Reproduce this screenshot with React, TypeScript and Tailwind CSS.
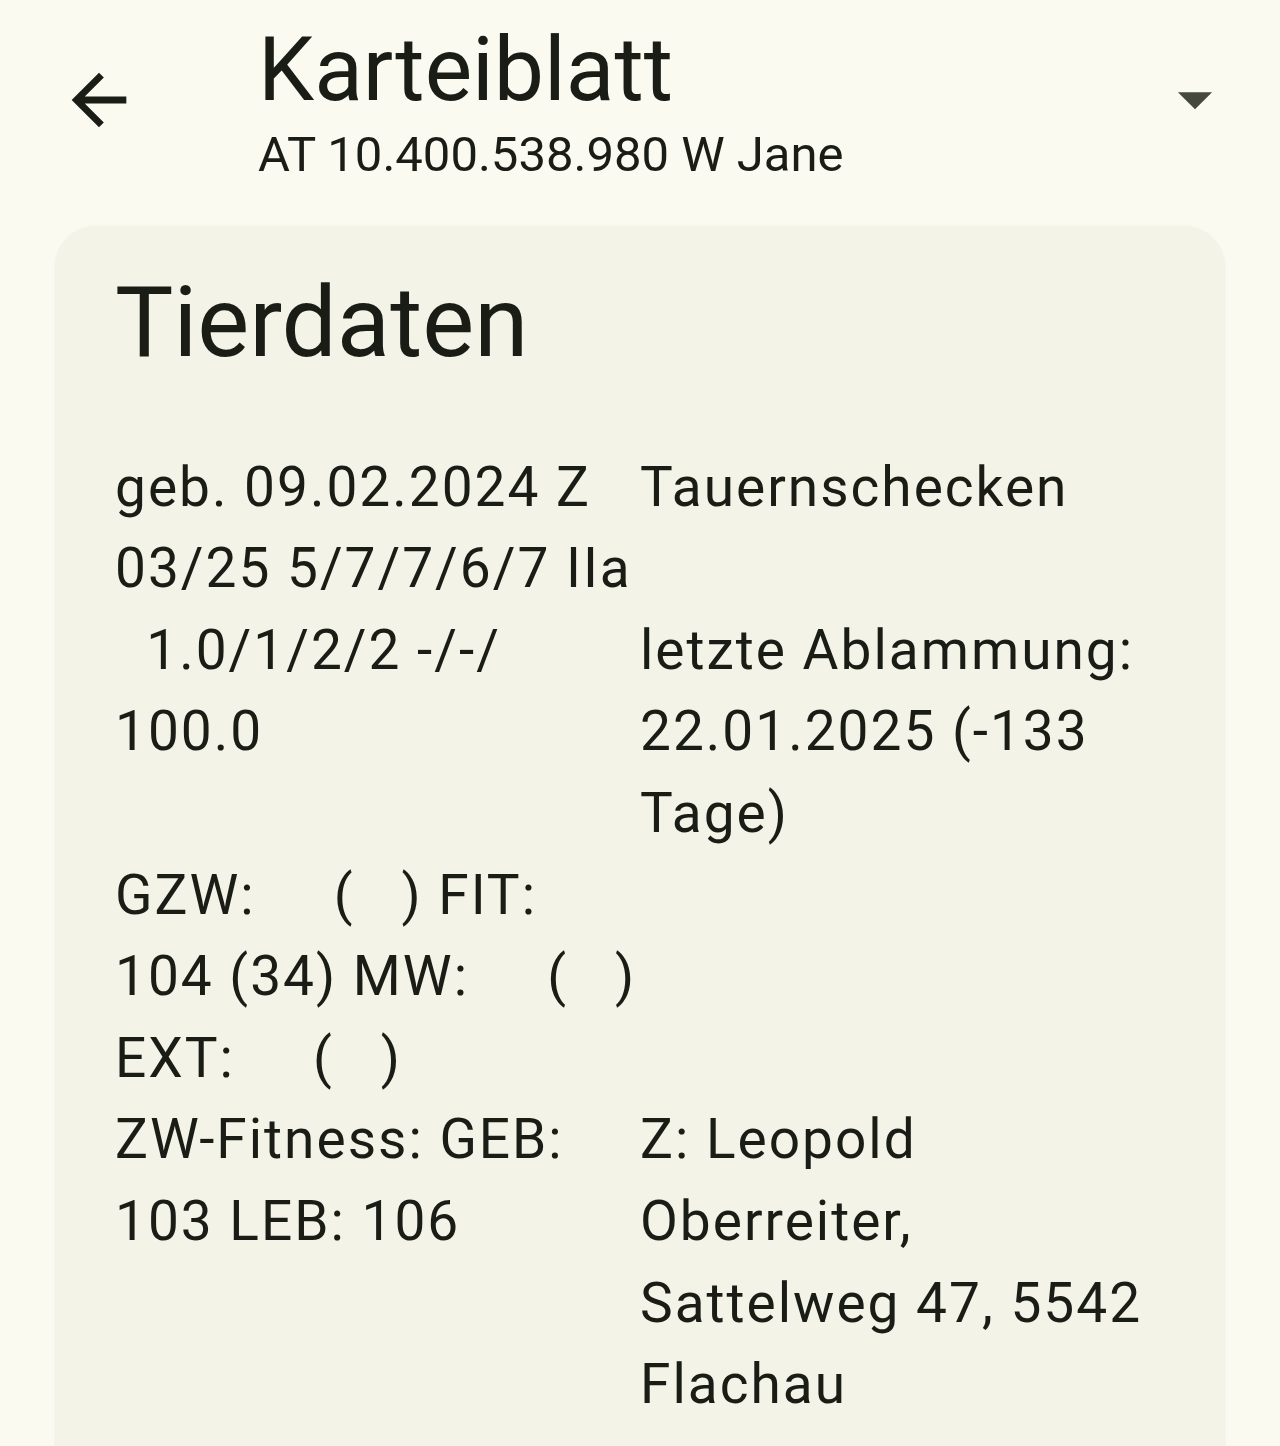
import React from "react";

const font = { fontFamily: "Roboto, 'Noto Sans', sans-serif" };

function Line({ children }: { children?: React.ReactNode }) {
  return <div className="whitespace-pre h-[81.6px]">{children ?? " "}</div>;
}

export default function App() {
  return (
    <div
      className="w-[1280px] h-[1446px] overflow-hidden bg-[#fafaf0] text-[#1a1c16]"
      style={font}
    >
      {/* Top app bar */}
      <div className="flex items-start pt-[18px]">
        <div className="w-[258px] flex pl-[58px] pt-[41px]">
          <svg width="82" height="82" viewBox="0 0 24 24" fill="#1a1c16">
            <path d="M20 11H7.83l5.59-5.59L12 4l-8 8 8 8 1.41-1.41L7.83 13H20v-2z" />
          </svg>
        </div>
        <div className="flex-1 flex flex-col">
          <div className="text-[89.5px] leading-[104px]">Karteiblatt</div>
          <div className="text-[49px] leading-[66px]">AT 10.400.538.980 W Jane</div>
        </div>
        <div className="w-[126px] pt-[40px] flex">
          <svg width="82" height="82" viewBox="0 0 24 24" fill="#45483d">
            <path d="M7 10l5 5 5-5z" />
          </svg>
        </div>
      </div>

      {/* Card */}
      <div className="mt-[38px] mx-[56px] rounded-[40px] bg-[#f3f3e8] shadow-[0_1px_3px_rgba(0,0,0,0.10)] pt-[37px] px-[59px] pb-[200px]">
        <div className="text-[98px] leading-[120px]">Tierdaten</div>
        <div className="mt-[62.6px] grid grid-cols-2 text-[55px] tracking-[2px]">
          <div>
            <Line>geb. 09.02.2024 Z</Line>
            <Line>03/25 5/7/7/6/7 IIa</Line>
            <Line>{"  1.0/1/2/2 -/-/"}</Line>
            <Line>100.0</Line>
          </div>
          <div>
            <Line>Tauernschecken</Line>
            <Line />
            <Line>letzte Ablammung:</Line>
            <Line>22.01.2025 (-133</Line>
            <Line>Tage)</Line>
          </div>
          <div>
            <Line>{"GZW:     (   ) FIT:"}</Line>
            <Line>{"104 (34) MW:     (   )"}</Line>
            <Line>{"EXT:     (   )"}</Line>
          </div>
          <div />
          <div>
            <Line>ZW-Fitness: GEB:</Line>
            <Line>103 LEB: 106</Line>
          </div>
          <div>
            <Line>Z: Leopold</Line>
            <Line>Oberreiter,</Line>
            <Line>Sattelweg 47, 5542</Line>
            <Line>Flachau</Line>
          </div>
        </div>
      </div>
    </div>
  );
}
